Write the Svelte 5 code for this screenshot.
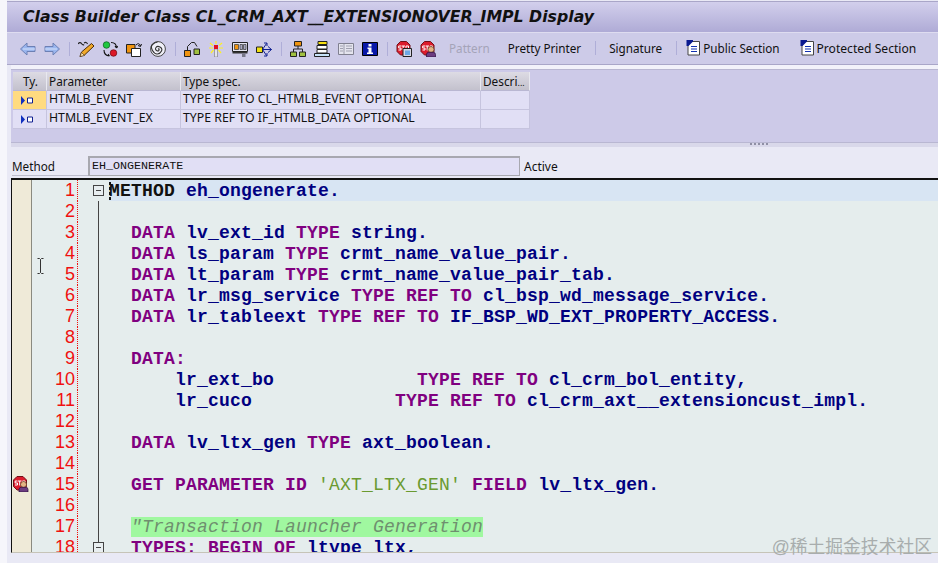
<script>
  const lines = [
    [['k', 'METHOD', 'b'], ['i', ' eh_ongenerate.']],
    [],
    [['s', '  '], ['k', 'DATA'], ['i', ' lv_ext_id '], ['k', 'TYPE'], ['i', ' string.']],
    [['s', '  '], ['k', 'DATA'], ['i', ' ls_param '], ['k', 'TYPE'], ['i', ' crmt_name_value_pair.']],
    [['s', '  '], ['k', 'DATA'], ['i', ' lt_param '], ['k', 'TYPE'], ['i', ' crmt_name_value_pair_tab.']],
    [['s', '  '], ['k', 'DATA'], ['i', ' lr_msg_service '], ['k', 'TYPE REF TO'], ['i', ' cl_bsp_wd_message_service.']],
    [['s', '  '], ['k', 'DATA'], ['i', ' lr_tableext '], ['k', 'TYPE REF TO'], ['i', ' IF_BSP_WD_EXT_PROPERTY_ACCESS.']],
    [],
    [['s', '  '], ['k', 'DATA:']],
    [['i', '      lr_ext_bo             '], ['k', 'TYPE REF TO'], ['i', ' cl_crm_bol_entity,']],
    [['i', '      lr_cuco             '], ['k', 'TYPE REF TO'], ['i', ' cl_crm_axt__extensioncust_impl.']],
    [],
    [['s', '  '], ['k', 'DATA'], ['i', ' lv_ltx_gen '], ['k', 'TYPE'], ['i', ' axt_boolean.']],
    [],
    [['s', '  '], ['k', 'GET PARAMETER ID'], ['i', ' '], ['t', "'AXT_LTX_GEN'"], ['i', ' '], ['k', 'FIELD'], ['i', ' lv_ltx_gen.']],
    [],
    [['s', '  '], ['c', '"Transaction Launcher Generation']],
    [['s', '  '], ['k', 'TYPES: BEGIN OF'], ['i', ' ltype ltx,']]
  ];

  const params = [
    { name: 'HTMLB_EVENT', spec: 'TYPE REF TO CL_HTMLB_EVENT OPTIONAL', selected: true },
    { name: 'HTMLB_EVENT_EX', spec: 'TYPE REF TO IF_HTMLB_DATA OPTIONAL', selected: false }
  ];
</script>

{#snippet stop()}
  <path d="M4.500.500h6l3.500 3.500v6.500L10.500 14h-6L1 10.500V4z" fill="#dc1c2c" stroke="#701018" />
  <path d="M5 5H2.700v2H5v2H2.500M5.500 5h3.500M7.200 5v4.500M10 5h2.500v4.500H10z" stroke="#fff" fill="none" stroke-width="1" />
{/snippet}

{#snippet person()}
  <circle cx="11" cy="8.500" r="3" fill="#e4b484" stroke="#5a3a20" stroke-width=".7" />
  <path d="M6.500 16v-2.500q0-2.200 2.200-2.200h4.600q2.200 0 2.200 2.200V16z" fill="#6c3c80" stroke="#2a0c3c" stroke-width=".7" />
{/snippet}

{#snippet docIcon()}
  <svg class="ic" viewBox="0 0 15 16">
    <path d="M2 1.500h11.500v13.500H2z" fill="#fff" stroke="#444" />
    <path d="M.5 0h6.500v1.500L2.500 6H.5z" fill="#0a1a90" />
    <path d="M5 6.500h6M5 9h6M5 11.500h6" stroke="#1030b0" stroke-width="1.200" />
  </svg>
{/snippet}

<div class="screen">
  <header class="title">Class Builder Class CL_CRM_AXT__EXTENSIONOVER_IMPL Display</header>

  <div class="toolbar">
    <div class="group">
      <svg class="ic" viewBox="0 0 16 16"><path d="M.5 8l6.500-6v3.500h8v5H7V14z" fill="#9ab6ee" stroke="#6c80b4" /><path d="M3 8h12" stroke="#d8e4fa" /></svg>
      <svg class="ic" viewBox="0 0 16 16"><path d="M15.500 8L9 2v3.500H1v5h8V14z" fill="#9ab6ee" stroke="#6c80b4" /><path d="M13 8H1" stroke="#d8e4fa" /></svg>
    </div>
    <i class="sep"></i>
    <div class="group">
      <svg class="ic" viewBox="0 0 16 16">
        <path d="M0 3q2-2.500 3.500-.5T6 3.500M6 2q2.500-1.500 3.500 1" stroke="#222" fill="none" stroke-width="1.200" />
        <path d="M13.500 2.500l2.500 2.500-9.500 9-4.500 1.500L3.500 11z" fill="#f0a828" stroke="#4a2c08" />
        <path d="M2 15.500l1.500-4 3 3z" fill="#ffe8b0" stroke="#4a2c08" stroke-width=".6" />
      </svg>
      <svg class="ic" viewBox="0 0 16 16">
        <circle cx="4.500" cy="4" r="3.300" fill="#20c840" stroke="#0a5a20" stroke-width=".7" />
        <circle cx="11.500" cy="12" r="3.300" fill="#dc1828" stroke="#6a0a10" stroke-width=".7" />
        <path d="M9 1.500q5.500 0 5.500 5.500M2 9q0 5.500 5.500 6M14.500 7L13 5.200M14.500 7L16 5.200M7.500 15L6 13.200" stroke="#111" fill="none" stroke-width="1.100" />
      </svg>
      <svg class="ic" viewBox="0 0 16 16">
        <path d="M.5 3.500h8.500v8.500H.5z" fill="#f09410" stroke="#222" />
        <path d="M5.500 7.500h9v8h-9z" fill="#fff" stroke="#222" />
        <path d="M10 4q3-3 4.500 1M14.500 5.500L15.500 3M14.500 5.500l-2.500-1" stroke="#111" fill="none" />
      </svg>
      <svg class="ic" viewBox="0 0 16 16" fill="none">
        <circle cx="8" cy="8" r="7.400" fill="#f0f0f8" stroke="#444" />
        <path d="M8 8q1.500-.6 1 1T6.600 9.500 6 6.500t4-.5 1.500 4-4 3-5-3.500 0-6 5-2.500" stroke="#333" stroke-width="1.100" />
      </svg>
    </div>
    <i class="sep"></i>
    <div class="group">
      <svg class="ic" viewBox="0 0 16 16">
        <path d="M.5 9.500h6v6h-6z" fill="#f09410" stroke="#222" />
        <path d="M10 8h5.500v5.500H10z" fill="#a0c040" stroke="#222" />
        <path d="M3.500 9.500V5.500l4-4h3l2.500 4" stroke="#222" fill="none" />
      </svg>
      <svg class="ic" viewBox="0 0 16 16">
        <path d="M6.500 8h3v8h-3z" fill="#e4e4ec" stroke="#777" stroke-width=".6" />
        <path d="M6 4h4v4H6z" fill="#e01020" />
        <path d="M8 0v3M2 2l3 2.500M14 2l-3 2.500M1 7h4M15 7h-4M3 12l2.500-3M13 12l-2.500-3" stroke="#fff020" stroke-width="1.200" />
      </svg>
      <svg class="ic" viewBox="0 0 16 16">
        <path d="M.5 1.500h15v9H.5z" fill="#e4e4f0" stroke="#222" />
        <path d="M2.500 3.500h4v5h-4z" fill="#f09410" stroke="#333" stroke-width=".7" />
        <path d="M8 3.500h2.500v5H8zM11.500 3.500H14v5h-2.500z" fill="#a8a8c0" stroke="#333" stroke-width=".7" />
        <path d="M.5 11h15v1.500H.5z" fill="#333" />
        <path d="M10 12.500h3.500V16H10z" fill="#778" />
      </svg>
      <svg class="ic" viewBox="0 0 16 16">
        <path d="M.5 6h6v5.500h-6z" fill="#f0e010" stroke="#222" />
        <path d="M6.500 8.500h9M12 5.500l3.500 3-3.500 3M6.500 8.500l4-6M6.500 8.500l4 6M8 2h3v3M8 15h3v-3" stroke="#102090" fill="none" />
      </svg>
    </div>
    <i class="sep"></i>
    <div class="group">
      <svg class="ic" viewBox="0 0 16 16">
        <path d="M4.500 .5h7v4.500h-7z" fill="#f09410" stroke="#222" />
        <path d="M8 5v3M3.500 11V8h9v3" stroke="#222" fill="none" />
        <path d="M.5 11h6v4.500h-6zM9.500 11h6v4.500h-6z" fill="#a0c040" stroke="#222" />
      </svg>
      <svg class="ic" viewBox="0 0 16 16">
        <path d="M4 .5h9v3H4z" fill="#f8e010" stroke="#222" />
        <path d="M3 4.500h10v3.500H3zM3 8.500h10V12H3z" fill="#fff" stroke="#222" />
        <path d="M.5 12.500h15v3H.5z" fill="#c8e4f8" stroke="#222" />
      </svg>
      <svg class="ic" viewBox="0 0 16 16">
        <path d="M.5 2.500h15v11H.5z" fill="#e4e4ee" stroke="#808090" />
        <path d="M6 3v10" stroke="#9a9aaa" />
        <path d="M2 5h3M2 7.500h3M2 10h3M8 5h6M8 7.500h6M8 10h6" stroke="#a0a0b0" />
      </svg>
      <svg class="ic" viewBox="0 0 16 16">
        <path d="M.5 1.500h15v13H.5z" fill="#0818a8" stroke="#000" />
        <path d="M6.500 3h3v2.500h-3zM5.500 6.500h4v5h1.500v1.500H5v-1.500h1.500V8h-1z" fill="#fff" />
      </svg>
    </div>
    <i class="sep"></i>
    <div class="group">
      <svg class="ic" viewBox="0 0 16 16">
        {@render stop()}
        <path d="M7 7.500h8.500V15.500H7z" fill="#d8d8e4" stroke="#222" />
        <path d="M9 9.500h5v4.500H9z" fill="#6ca8e4" />
      </svg>
      <svg class="ic" viewBox="0 0 16 16">
        {@render stop()}
        {@render person()}
      </svg>
    </div>
    <div class="actions">
      <span class="disabled">Pattern</span>
      <span class="pretty">Pretty Printer</span>
      <i class="sep"></i>
      <span>Signature</span>
      <i class="sep"></i>
      <span class="with-icon pub">{@render docIcon()}Public Section</span>
      <span class="with-icon prot">{@render docIcon()}Protected Section</span>
    </div>
  </div>

  <section class="params">
    <div class="table">
      <div class="head ty">Ty.</div>
      <div class="head">Parameter</div>
      <div class="head">Type spec.</div>
      <div class="head descr">Descri<small>...</small></div>
      {#each params as p}
        <div class="cell ty-cell" class:selected={p.selected}>
          <svg width="14" height="9" viewBox="0 0 14 9">
            <path d="M1 0l4 4.500L1 9z" fill="#1030c0" />
            <path d="M7.500 2h5v5h-5z" fill="#fff" stroke="#102090" />
          </svg>
        </div>
        <div class="cell">{p.name}</div>
        <div class="cell">{p.spec}</div>
        <div class="cell"></div>
      {/each}
    </div>
  </section>

  <div class="splitter"><span class="grip"></span></div>

  <div class="method-row">
    <label for="method">Method</label>
    <div id="method" class="field">EH_ONGENERATE</div>
    <span>Active</span>
  </div>

  <div class="editor">
    {#each lines as line, n}
      <div class="line" class:current={n === 0}>
        <div class="marker">
          {#if n === 14}
            <svg width="17" height="16" viewBox="0 0 16 16">
              {@render stop()}
              {@render person()}
            </svg>
          {/if}
        </div>
        <div class="num">{n + 1}</div>
        <div class="fold">
          {#if n === 0}
            <span class="box"></span>
          {:else if n === 17}
            <span class="rail short"></span>
            <span class="box"></span>
          {:else}
            <span class="rail"></span>
          {/if}
        </div>
        <pre class="code">{#each line as [kind, text, extra]}<span class="{kind} {extra ?? ''}">{text}</span>{/each}</pre>
      </div>
    {/each}

    <i class="caret"></i>
    <svg class="mouse" width="7" height="16" viewBox="0 0 7 16">
      <path d="M.5.500h2l1 1 1-1h2M3.500 1.500v13M.5 15.500h2l1-1 1 1h2" stroke="#333" fill="none" />
    </svg>
  </div>

  <div class="watermark">@稀土掘金技术社区</div>
</div>

<style>
  :global(body) {
    margin: 0;
    background: #e9e9f5;
  }

  .screen {
    position: relative;
    width: 938px;
    height: 563px;
    overflow: hidden;
    padding-left: 7px;
    box-sizing: border-box;
    background: linear-gradient(to right, #f6f6fb 7px, #e9e9f5 7px);
    font-family: "Noto Sans", sans-serif;
    font-size: 12px;
    color: #111;
  }

  .title {
    margin-top: 1px;
    height: 31px;
    box-sizing: border-box;
    border-top: 1px solid #a9a6c8;
    padding: 5px 0 0 16px;
    background: linear-gradient(#d2cfec, #afabd6);
    font-family: "DejaVu Sans", sans-serif;
    font-size: 15.750px;
    font-weight: bold;
    font-style: italic;
    white-space: nowrap;
  }

  .toolbar {
    height: 33px;
    box-sizing: border-box;
    display: flex;
    align-items: center;
    padding-left: 13px;
    border-top: 1px solid #dedcf0;
    border-bottom: 1px solid #a9a6c8;
    background: #cdcbe8;
    font-size: 11.700px;
    white-space: nowrap;
  }

  .group {
    display: flex;
    gap: 8px;
  }

  .ic {
    width: 16px;
    height: 16px;
    flex: none;
  }

  .sep {
    flex: none;
    width: 1px;
    height: 14px;
    margin: 0 8.500px;
    background: #afaed8;
  }

  .actions {
    display: flex;
    align-items: center;
    margin-left: 13px;
    line-height: 15px;
    padding-bottom: 1px;
  }

  .disabled {
    color: #a5a4b8;
  }

  .pretty {
    margin-left: 18px;
  }

  .actions .sep {
    margin: 0 13.500px;
  }

  .with-icon {
    display: flex;
    align-items: center;
    gap: 2px;
  }

  .pub {
    margin-left: -4px;
    margin-right: 20px;
  }

  .prot {
    font-size: 12.100px;
  }

  .with-icon .ic {
    width: 15px;
  }

  .params {
    margin-top: 4px;
    margin-left: 4px;
    height: 74px;
    box-sizing: border-box;
    padding: 2px 0 0 2px;
    border-top: 1px solid #b9b7d2;
    border-bottom: 1px solid #b9b7d2;
    background: #cdcae8;
    box-shadow: 0 -4px 0 #f2f2fa;
  }

  .table {
    display: grid;
    grid-template-columns: 34px 134px 300px 49px;
    grid-auto-rows: 19px;
    width: 517px;
  }

  .head {
    box-sizing: border-box;
    padding: 0 0 0 2px;
    line-height: 18px;
    font-size: 11.800px;
    background: linear-gradient(#dddbe4, #c3c1cd);
    border-right: 1px solid #e8e8ef;
    border-bottom: 1px solid #b9b7d2;
  }

  .ty {
    text-align: center;
  }

  .descr small {
    font-size: 9px;
  }

  .cell {
    box-sizing: border-box;
    padding-left: 2px;
    line-height: 16px;
    font-size: 12.300px;
    background: #e1dff5;
    border-right: 1px solid #c6c4de;
    border-bottom: 1px solid #c6c4de;
  }

  .ty-cell {
    padding: 5px 0 0 7px;
    line-height: 0;
  }

  .selected {
    background: #ffdb80;
  }

  .splitter {
    margin-left: 4px;
    height: 4px;
    padding-left: 739px;
    background: #d9d8ea;
  }

  .grip {
    display: block;
    width: 19px;
    height: 2px;
    background: repeating-linear-gradient(to right, #8f8fa5 0 2px, transparent 2px 4px);
  }

  .method-row {
    height: 31px;
    display: flex;
    align-items: flex-end;
    padding: 0 0 2px 5px;
    box-sizing: border-box;
    background: #e9e9f5;
  }

  .method-row label {
    width: 76px;
    line-height: 18px;
    font-size: 11.700px;
    border-bottom: 1px solid #bdbdcc;
  }

  .method-row span {
    margin-left: 4px;
    line-height: 18px;
  }

  .field {
    width: 432px;
    height: 20px;
    box-sizing: border-box;
    padding-left: 2px;
    background: #e1dff5;
    border: 1px solid #a8a8b0;
    border-top-width: 2px;
    border-left-width: 2px;
    font-family: "Liberation Mono", monospace;
    font-size: 11.700px;
    line-height: 17px;
  }

  .editor {
    position: relative;
    margin-left: 4px;
    height: 375px;
    overflow: hidden;
    box-sizing: border-box;
    border-top: 2px solid #111;
    border-left: 1px solid #111;
    border-bottom: 1px solid #c6c4b8;
    background: #e5eded;
  }

  .line {
    display: flex;
    height: 21px;
  }

  .marker {
    flex: none;
    width: 20px;
    padding-top: 2px;
    box-sizing: border-box;
    background: #efead8;
    border-right: 1px solid #8a8a80;
  }

  .num {
    flex: none;
    width: 46px;
    text-align: right;
    padding-right: 2px;
    box-sizing: border-box;
    font-family: "Liberation Sans", sans-serif;
    font-size: 18px;
    line-height: 21px;
    color: #f01010;
    border-right: 1px dotted #f01010;
  }

  .fold {
    position: relative;
    flex: none;
    width: 31px;
  }

  .rail {
    position: absolute;
    left: 20px;
    top: 0;
    bottom: 0;
    width: 1px;
    background: #444;
  }

  .short {
    bottom: auto;
    height: 5px;
  }

  .box {
    position: absolute;
    left: 15px;
    top: 5px;
    width: 9px;
    height: 9px;
    border: 1px solid #444;
    background: linear-gradient(#444, #444) center / 5px 1px no-repeat #e8eef0;
  }

  .code {
    flex: 1;
    margin: 0;
    padding-top: 1px;
    height: 21px;
    box-sizing: border-box;
    font-family: "Liberation Mono", monospace;
    font-size: 18px;
    letter-spacing: .2px;
    line-height: 21px;
    font-weight: bold;
    white-space: pre;
  }

  .current .code {
    background: #d8e5f3;
  }

  .k {
    color: #800080;
  }

  .k.b {
    color: #111;
  }

  .i {
    color: #000080;
  }

  .t {
    color: #6a9a30;
    font-weight: normal;
  }

  .c {
    color: #6f8f6f;
    background: #a0f8a0;
    font-style: italic;
    font-weight: normal;
  }

  .caret {
    position: absolute;
    left: 97px;
    top: 2px;
    width: 2px;
    height: 19px;
    background: repeating-linear-gradient(#111 0 3px, transparent 3px 5px);
  }

  .mouse {
    position: absolute;
    left: 25px;
    top: 78px;
  }

  .watermark {
    position: absolute;
    right: 6px;
    top: 536px;
    font-family: "Liberation Sans", "Noto Sans CJK SC", sans-serif;
    font-size: 17.800px;
    line-height: 22px;
    color: #a8adad;
  }
</style>
